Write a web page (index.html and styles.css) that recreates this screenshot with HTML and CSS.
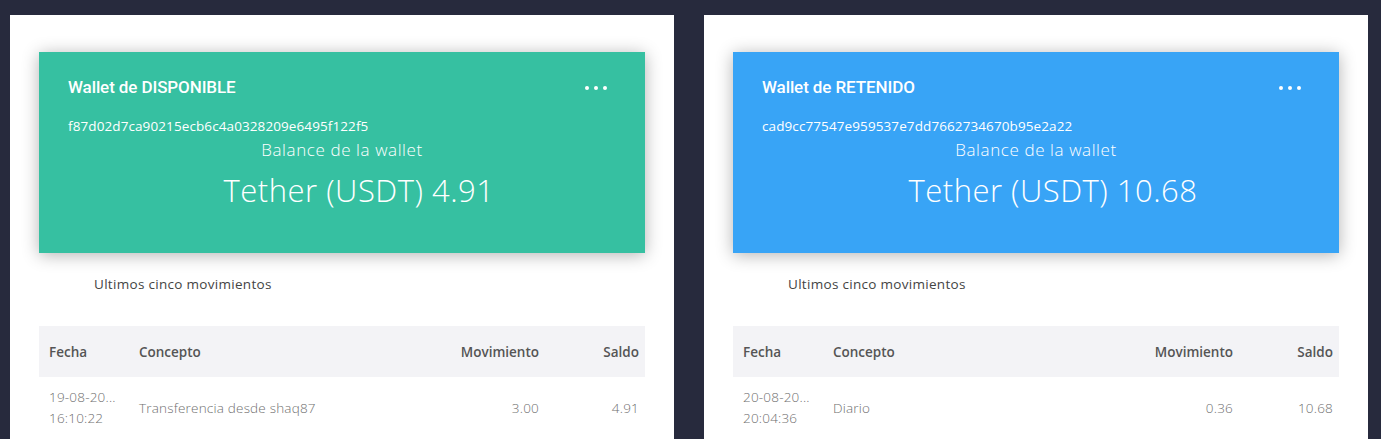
FILE: index.html
```html
<!DOCTYPE html>
<html lang="es">
<head>
<meta charset="utf-8">
<title>Wallets</title>
<link rel="stylesheet" href="styles.css">
</head>
<body>
<div class="page">
  <section class="panel">
    <div class="card green">
      <div class="card-head">
        <h2 class="card-title">Wallet de DISPONIBLE</h2>
        <div class="dots"><span></span><span></span><span></span></div>
      </div>
      <div class="hash">f87d02d7ca90215ecb6c4a0328209e6495f122f5</div>
      <div class="bal-label">Balance de la wallet</div>
      <div class="bal-value">Tether (USDT) 4.91</div>
    </div>
    <div class="subtitle">Ultimos cinco movimientos</div>
    <table class="moves">
      <thead>
        <tr><th class="c-date">Fecha</th><th class="c-con">Concepto</th><th class="c-mov">Movimiento</th><th class="c-sal">Saldo</th></tr>
      </thead>
      <tbody>
        <tr>
          <td class="c-date"><span class="line">19-08-20...</span><span class="line">16:10:22</span></td>
          <td class="c-con">Transferencia desde shaq87</td>
          <td class="c-mov">3.00</td>
          <td class="c-sal">4.91</td>
        </tr>
      </tbody>
    </table>
  </section>
  <section class="panel">
    <div class="card blue">
      <div class="card-head">
        <h2 class="card-title">Wallet de RETENIDO</h2>
        <div class="dots"><span></span><span></span><span></span></div>
      </div>
      <div class="hash">cad9cc77547e959537e7dd7662734670b95e2a22</div>
      <div class="bal-label">Balance de la wallet</div>
      <div class="bal-value">Tether (USDT) 10.68</div>
    </div>
    <div class="subtitle">Ultimos cinco movimientos</div>
    <table class="moves">
      <thead>
        <tr><th class="c-date">Fecha</th><th class="c-con">Concepto</th><th class="c-mov">Movimiento</th><th class="c-sal">Saldo</th></tr>
      </thead>
      <tbody>
        <tr>
          <td class="c-date"><span class="line">20-08-20...</span><span class="line">20:04:36</span></td>
          <td class="c-con">Diario</td>
          <td class="c-mov">0.36</td>
          <td class="c-sal">10.68</td>
        </tr>
      </tbody>
    </table>
  </section>
</div>
</body>
</html>
```
FILE: styles.css
```css
html, body {
  margin: 0;
  padding: 0;
  background: #272a3d;
  height: 100%;
  overflow: hidden;
}
body {
  font-family: "Open Sans", "Liberation Sans", sans-serif;
}
.page {
  display: flex;
  gap: 30px;
  padding: 15px 13px 0 10px;
  height: 100%;
  box-sizing: border-box;
}
.panel {
  flex: 1;
  background: #ffffff;
  padding: 37px 29px 0 29px;
  overflow: hidden;
}
.card {
  height: 201px;
  box-sizing: border-box;
  padding: 22px 29px 0 29px;
  color: #ffffff;
  box-shadow: 0 2px 16px rgba(0, 0, 0, 0.3);
}
.green { background: #36c0a1; }
.blue { background: #38a4f6; }
.card-head {
  display: flex;
  justify-content: space-between;
  align-items: center;
  height: 26px;
}
.card-title {
  margin: 0;
  font-family: Roboto, "Liberation Sans", sans-serif;
  font-weight: 500;
  font-size: 17px;
  letter-spacing: -0.1px;
}
.dots {
  display: flex;
  gap: 5px;
  margin-right: 9px;
  margin-top: 2px;
}
.dots span {
  width: 4px;
  height: 4px;
  border-radius: 50%;
  background: #ffffff;
}
.hash {
  margin-top: 17px;
  font-size: 13.5px;
  letter-spacing: 0.1px;
  line-height: 18px;
}
.bal-label {
  text-align: center;
  font-size: 17px;
  font-weight: 300;
  letter-spacing: 0.6px;
  line-height: 22px;
  margin-top: 4px;
}
.bal-value {
  text-align: center;
  font-size: 31px;
  font-weight: 300;
  letter-spacing: 0.5px;
  line-height: 40px;
  margin-top: 9px;
  padding-left: 34px;
}
.subtitle {
  margin: 22px 0 0 55px;
  font-size: 13.5px;
  letter-spacing: 0.3px;
  color: #444444;
  line-height: 18px;
}
.moves {
  width: 100%;
  border-collapse: collapse;
  margin-top: 33px;
  font-size: 13.5px;
  table-layout: fixed;
}
.moves th {
  background: #f3f3f6;
  height: 51px;
  font-weight: 600;
  color: #555555;
  text-align: left;
  padding: 0 0 0 10px;
}
.moves td {
  color: #6f6f6f;
  font-weight: 300;
  letter-spacing: 0.2px;
  padding: 10px 0 0 10px;
  vertical-align: middle;
}
.moves .c-date { width: 80px; }
.moves .c-mov { width: 160px; text-align: right; padding-right: 0; padding-left: 0; }
.moves .c-sal { width: 100px; text-align: right; padding-right: 6px; padding-left: 0; }
.line {
  display: block;
  white-space: nowrap;
  line-height: 21px;
}
```
